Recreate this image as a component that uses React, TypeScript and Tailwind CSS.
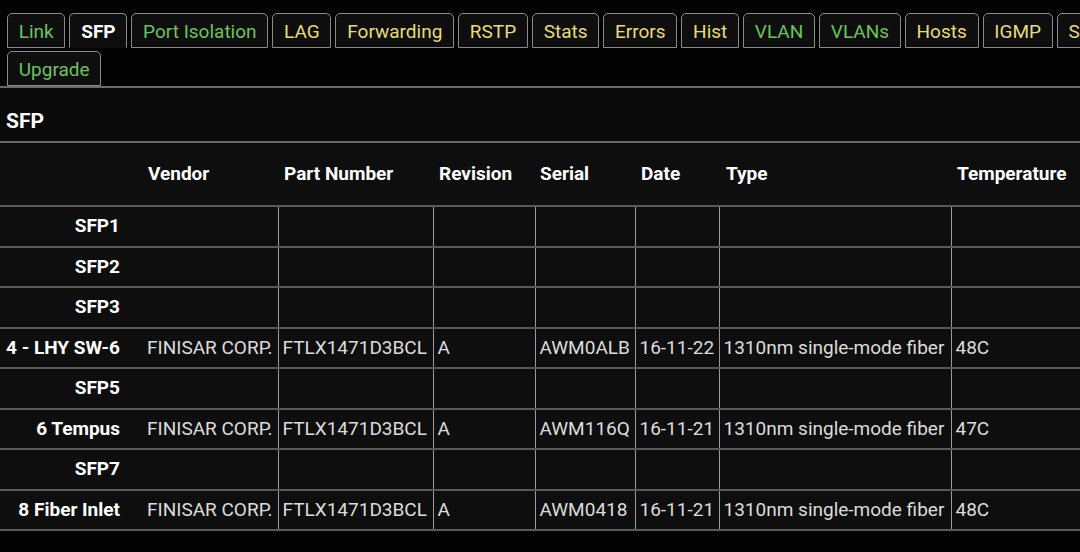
const firstRow = [
  { name: "Link", color: "green" },
  { name: "SFP", color: "active" },
  { name: "Port Isolation", color: "green" },
  { name: "LAG", color: "yellow" },
  { name: "Forwarding", color: "yellow" },
  { name: "RSTP", color: "yellow" },
  { name: "Stats", color: "yellow" },
  { name: "Errors", color: "yellow" },
  { name: "Hist", color: "yellow" },
  { name: "VLAN", color: "green" },
  { name: "VLANs", color: "green" },
  { name: "Hosts", color: "yellow" },
  { name: "IGMP", color: "yellow" },
  { name: "SNMP", color: "yellow" },
  { name: "System", color: "green" },
];

type Row = {
  label: string;
  vendor?: string;
  part?: string;
  rev?: string;
  serial?: string;
  date?: string;
  type?: string;
  temp?: string;
};

const finisar = {
  vendor: "FINISAR CORP.",
  part: "FTLX1471D3BCL",
  rev: "A",
  type: "1310nm single-mode fiber",
};

const rows: Row[] = [
  { label: "SFP1" },
  { label: "SFP2" },
  { label: "SFP3" },
  { label: "4 - LHY SW-6", ...finisar, serial: "AWM0ALB", date: "16-11-22", temp: "48C" },
  { label: "SFP5" },
  { label: "6 Tempus", ...finisar, serial: "AWM116Q", date: "16-11-21", temp: "47C" },
  { label: "SFP7" },
  { label: "8 Fiber Inlet", ...finisar, serial: "AWM0418", date: "16-11-21", temp: "48C" },
];

function Tab({ name, color }: { name: string; color: string }) {
  const text =
    color === "active"
      ? "text-white font-bold border-b-transparent"
      : color === "green"
        ? "text-[#6cc35c]"
        : "text-[#e6dc78]";
  return (
    <div
      className={`flex h-[35px] shrink-0 items-center rounded-t-[5px] border-[1.5px] border-[#8a8a8a] bg-[#0e0e0e] px-[10.75px] pt-[3px] text-[19px] ${text}`}
    >
      {name}
    </div>
  );
}

export default function App() {
  return (
    <div
      className="h-[552px] w-[1080px] overflow-hidden bg-[#030303]"
      style={{ fontFamily: "Roboto, 'Noto Sans', sans-serif" }}
    >
      {/* Tab bar */}
      <div className="flex w-[1080px] flex-col gap-[3px] overflow-hidden border-b-2 border-[#6a6a6a] pl-[7px] pt-[13px]">
        <div className="flex gap-[4px]">
          {firstRow.map((t) => (
            <Tab key={t.name} {...t} />
          ))}
        </div>
        <div className="flex">
          <Tab name="Upgrade" color="green" />
        </div>
      </div>

      {/* Section */}
      <div className="flex h-[55px] items-center border-b-2 border-[#6a6a6a] bg-[#0a0a0a] px-[6px] pt-[14px] text-[21px] font-bold text-white">
        SFP
      </div>

      <table className="w-[1080px] table-fixed border-collapse bg-[#0e0e0e] text-[19px]">
        <colgroup>
          <col className="w-[140px]" />
          <col className="w-[138px]" />
          <col className="w-[155px]" />
          <col className="w-[102px]" />
          <col className="w-[100px]" />
          <col className="w-[84px]" />
          <col className="w-[232px]" />
          <col />
        </colgroup>
        <thead>
          <tr className="h-[63px] border-b-2 border-[#5a5a5a] text-left font-bold text-white">
            <th />
            <th className="pl-[8px]">Vendor</th>
            <th className="pl-[6px]">Part Number</th>
            <th className="pl-[6px]">Revision</th>
            <th className="pl-[5px]">Serial</th>
            <th className="pl-[6px]">Date</th>
            <th className="pl-[7px]">Type</th>
            <th className="pl-[6px]">Temperature</th>
          </tr>
        </thead>
        <tbody>
          {rows.map((r) => (
            <tr key={r.label} className="h-[40.5px] border-b-2 border-[#5a5a5a] text-[#dcdcdc]">
              <td className="whitespace-nowrap pr-[20px] text-right font-bold text-white">{r.label}</td>
              <td className="whitespace-nowrap pl-[7px]">{r.vendor}</td>
              <td className="whitespace-nowrap border-l border-[#9a9a9a] pl-[4px]">{r.part}</td>
              <td className="whitespace-nowrap border-l border-[#9a9a9a] pl-[4px]">{r.rev}</td>
              <td className="whitespace-nowrap border-l border-[#9a9a9a] pl-[4px]">{r.serial}</td>
              <td className="whitespace-nowrap border-l border-[#9a9a9a] pl-[4px]">{r.date}</td>
              <td className="whitespace-nowrap border-l border-[#9a9a9a] pl-[4px]">{r.type}</td>
              <td className="whitespace-nowrap border-l border-[#9a9a9a] pl-[4px]">{r.temp}</td>
            </tr>
          ))}
        </tbody>
      </table>
    </div>
  );
}
